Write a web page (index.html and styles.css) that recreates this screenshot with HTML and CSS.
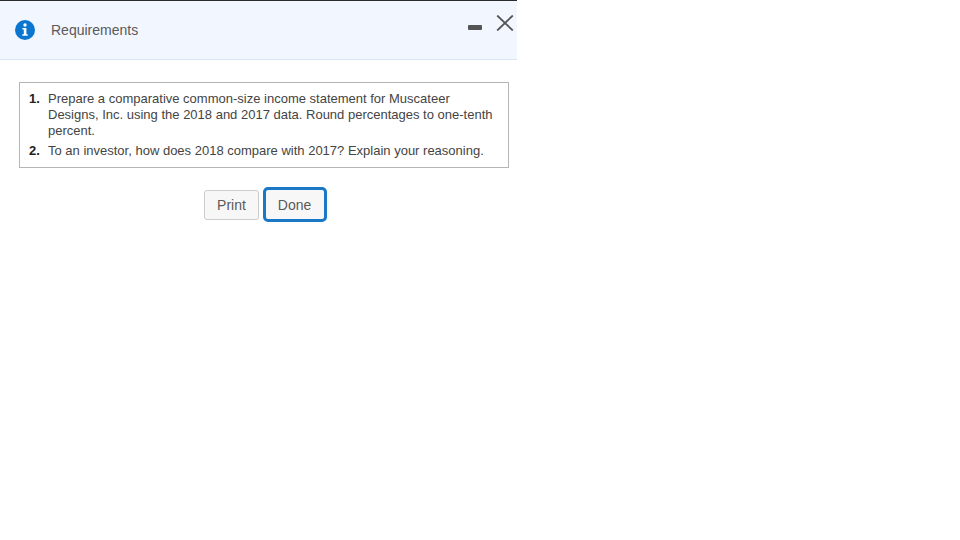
FILE: index.html
```html
<!DOCTYPE html>
<html lang="en">
<head>
<meta charset="utf-8">
<title>Requirements</title>
<link rel="stylesheet" href="styles.css">
</head>
<body>
<div class="dialog">
  <header class="head">
    <svg class="info" viewBox="0 0 20 20" width="20" height="20" aria-hidden="true">
      <circle cx="10" cy="10" r="10" fill="#0b76d0"/>
      <circle cx="10" cy="5" r="1.7" fill="#fff"/>
      <path d="M7.4 8h4v6.2h1.3v1.6H7.3v-1.6h1.5V9.6H7.4z" fill="#fff"/>
    </svg>
    <span class="title">Requirements</span>
    <div class="controls">
      <span class="min"></span>
      <svg class="close" viewBox="0 0 18 16" width="18" height="16" aria-hidden="true">
        <path d="M1.2 0.5L16.8 15.5M16.8 0.5L1.2 15.5" stroke="#555" stroke-width="1.8" fill="none"/>
      </svg>
    </div>
  </header>
  <main class="body">
    <ol class="reqs">
      <li class="req"><b class="num">1.</b><span>Prepare a comparative common-size income statement for Muscateer Designs, Inc. using the 2018 and 2017 data. Round percentages to one-tenth percent.</span></li>
      <li class="req"><b class="num">2.</b><span>To an investor, how does 2018 compare with 2017? Explain your reasoning.</span></li>
    </ol>
    <div class="actions">
      <button class="btn" type="button">Print</button>
      <button class="btn focus" type="button">Done</button>
    </div>
  </main>
</div>
</body>
</html>
```
FILE: styles.css
```css
* { box-sizing: border-box; }
html, body { margin: 0; padding: 0; background: #fff; }
body { font-family: "Liberation Sans", Arial, sans-serif; color: #444; }
.dialog { width: 517px; }
.head {
  height: 60px;
  background: #f2f6fe;
  border-top: 1px solid #2b2b2b;
  border-bottom: 1px solid #d8e4f2;
  display: flex;
  align-items: center;
  padding-left: 14.5px;
}
.info { flex: none; }
.title { margin-left: 16.5px; font-size: 14px; color: #5a5a5a; }
.controls { margin-left: auto; display: flex; align-items: center; gap: 14px; padding-right: 3px; align-self: flex-start; padding-top: 14px; }
.min { width: 14px; height: 5px; background: #555; border-radius: 1px; margin-top: 9px; }
.close { display: block; }
.body { padding: 22px 8px 0 19px; }
.reqs {
  list-style: none;
  margin: 0;
  padding: 8px 8px 8px 9px;
  border: 1px solid #b5b5b5;
  font-size: 13px;
  line-height: 16px;
  color: #444;
}
.req { display: flex; }
.req + .req { margin-top: 4px; }
.num { flex: none; width: 19px; color: #222; }
.actions { display: flex; justify-content: center; align-items: center; gap: 4px; margin-top: 19px; padding-left: 3px; }
.btn {
  font-family: "Liberation Sans", Arial, sans-serif;
  font-size: 14px;
  color: #5a5a5a;
  background: #f7f7f7;
  border: 1px solid #ccc;
  border-radius: 3px;
  height: 30px;
  padding: 0;
  width: 55px;
}
.focus { width: 64px; height: 35px; padding-right: 1px; border: 3px solid #1a78c6; border-radius: 5px; }
```
